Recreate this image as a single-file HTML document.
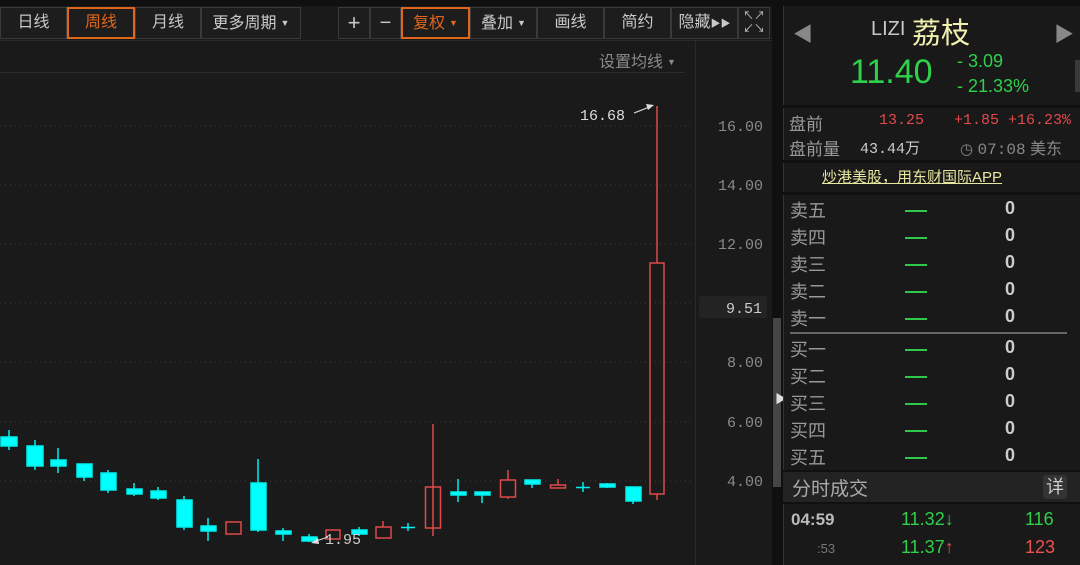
<!DOCTYPE html>
<html><head><meta charset="utf-8"><style>
*{margin:0;padding:0;box-sizing:border-box}
body{width:1080px;height:565px;background:#1a1a1a;position:relative;overflow:hidden;font-family:"Liberation Sans","Noto Sans CJK SC",sans-serif;color:#bbb}
.a{position:absolute;white-space:nowrap}
.btn{position:absolute;top:7px;height:32px;border:1px solid #3a3a3a;background:#1d1d1d;color:#c8c8c8;font-size:16px;line-height:30px;text-align:center}
.or{border:2px solid #e0661c;color:#e0661c;line-height:28px}
.tri{font-size:9px;vertical-align:2px;margin-left:4px}
.mono{font-family:"Liberation Mono","DejaVu Sans Mono",monospace}
.lbl{position:absolute;left:790px;font-size:18px;color:#999}
.dash{position:absolute;left:905px;width:22px;height:2px;background:#2ec94a}
.zero{position:absolute;left:1005px;font-size:18px;font-weight:bold;color:#ccc}
</style></head><body>
<div class="a" style="left:0;top:0;width:1080px;height:6px;background:#101010"></div>
<div class="btn" style="left:0;width:67px">日线</div>
<div class="btn or" style="left:67px;width:68px">周线</div>
<div class="btn" style="left:135px;width:66px">月线</div>
<div class="btn" style="left:201px;width:100px">更多周期<span class="tri">▼</span></div>
<div class="btn" style="left:338px;width:32px;font-size:22px">+</div>
<div class="btn" style="left:370px;width:31px;font-size:20px">−</div>
<div class="btn or" style="left:401px;width:69px">复权<span class="tri">▼</span></div>
<div class="btn" style="left:470px;width:67px">叠加<span class="tri">▼</span></div>
<div class="btn" style="left:537px;width:67px">画线</div>
<div class="btn" style="left:604px;width:67px">简约</div>
<div class="btn" style="left:671px;width:67px">隐藏<span style="font-size:10px">▶▶</span></div>
<div class="btn" style="left:738px;width:32px;font-size:11px;line-height:13px;padding-top:2px">↖↗<br>↙↘</div>
<div class="a" style="left:0;top:40px;width:772px;height:1px;background:#2a2a2a"></div>
<div class="a" style="left:599px;top:48px;font-size:16px;color:#8a8a8a">设置均线<span class="tri">▼</span></div>
<div class="a" style="left:0;top:72px;width:685px;height:1px;background:#2c2c2c"></div>
<div class="a" style="left:695px;top:41px;width:1px;height:524px;background:#2a2a2a"></div>
<div class="a" style="left:772px;top:6px;width:11px;height:559px;background:#101010"></div>
<div class="a" style="left:773px;top:318px;width:8px;height:169px;background:#454545"></div>
<div class="a" style="left:775px;top:390px;font-size:12px;color:#ddd">▶</div>

<svg class="a" style="left:0;top:0" width="772" height="565">
<g stroke="#3a3a3a" stroke-dasharray="1 4">
<line x1="0" y1="126" x2="695" y2="126"/><line x1="0" y1="185" x2="695" y2="185"/><line x1="0" y1="244" x2="695" y2="244"/><line x1="0" y1="303" x2="695" y2="303"/><line x1="0" y1="362" x2="695" y2="362"/><line x1="0" y1="422" x2="695" y2="422"/><line x1="0" y1="481" x2="695" y2="481"/>
</g>
<g fill="#8a8a8a" font-family="Liberation Mono,monospace" font-size="15" text-anchor="end">
<text x="763" y="131">16.00</text><text x="763" y="190">14.00</text><text x="763" y="249">12.00</text><text x="763" y="367">8.00</text><text x="763" y="427">6.00</text><text x="763" y="486">4.00</text>
</g>
<rect x="699" y="296" width="68" height="22" rx="2" fill="#232323"/>
<text x="762" y="313" fill="#ccc" font-family="Liberation Mono,monospace" font-size="15" text-anchor="end">9.51</text>
<g stroke="#00f0f0" fill="#00ffff" stroke-width="1.5">
<line x1="9" y1="430" x2="9" y2="450"/><rect x="1" y="437" width="16" height="9"/>
<line x1="35" y1="440" x2="35" y2="470"/><rect x="27" y="446" width="16" height="20"/>
<line x1="58" y1="448" x2="58" y2="473"/><rect x="51" y="460" width="15" height="6"/>
<line x1="84" y1="464" x2="84" y2="481"/><rect x="77" y="464" width="15" height="13"/>
<line x1="108" y1="470" x2="108" y2="493"/><rect x="101" y="473" width="15" height="17"/>
<line x1="134" y1="483" x2="134" y2="496"/><rect x="127" y="489" width="15" height="5"/>
<line x1="158" y1="487" x2="158" y2="500"/><rect x="151" y="491" width="15" height="7"/>
<line x1="184" y1="496" x2="184" y2="530"/><rect x="177" y="500" width="15" height="27"/>
<line x1="208" y1="518" x2="208" y2="541"/><rect x="201" y="526" width="15" height="5"/>
<line x1="258" y1="459" x2="258" y2="532"/><rect x="251" y="483" width="15" height="47"/>
<line x1="283" y1="528" x2="283" y2="541"/><rect x="276" y="531" width="15" height="3"/>
<line x1="309" y1="534" x2="309" y2="542"/><rect x="302" y="537" width="15" height="4"/>
<line x1="359" y1="527" x2="359" y2="536"/><rect x="352" y="530" width="15" height="4"/>
<line x1="408" y1="523" x2="408" y2="531"/><line x1="401" y1="527.5" x2="415" y2="527.5"/>
<line x1="458" y1="479" x2="458" y2="502"/><rect x="451" y="492" width="15" height="3"/>
<line x1="482" y1="492" x2="482" y2="503"/><rect x="475" y="492" width="15" height="3"/>
<line x1="532" y1="480" x2="532" y2="488"/><rect x="525" y="480" width="15" height="4"/>
<line x1="583" y1="482" x2="583" y2="492"/><line x1="576" y1="487.5" x2="590" y2="487.5"/>
<line x1="607" y1="483" x2="607" y2="488"/><rect x="600" y="484" width="15" height="3"/>
<line x1="633" y1="487" x2="633" y2="504"/><rect x="626" y="487" width="15" height="14"/>
</g>
<g stroke="#e04a4a" fill="none" stroke-width="1.5">
<rect x="226" y="522" width="15" height="12"/>
<rect x="326" y="530" width="14" height="9"/>
<line x1="383" y1="521" x2="383" y2="527"/><rect x="376" y="527" width="15" height="11"/>
<line x1="433" y1="424" x2="433" y2="536"/><rect x="425.5" y="487" width="15" height="41"/>
<line x1="508" y1="470" x2="508" y2="480"/><line x1="508" y1="497" x2="508" y2="499"/><rect x="500.5" y="480" width="15" height="17"/>
<line x1="558" y1="479" x2="558" y2="485"/><rect x="550.5" y="485" width="15" height="3"/>
<line x1="657" y1="106" x2="657" y2="263"/><line x1="657" y1="494" x2="657" y2="500"/><rect x="650" y="263" width="14" height="231"/>
</g>
<text x="580" y="120" fill="#ddd" font-family="Liberation Mono,monospace" font-size="15">16.68</text>
<line x1="634" y1="113" x2="652" y2="106" stroke="#ddd" stroke-width="1.2"/><path d="M646 104 L654 105 L648 110Z" fill="#ddd"/>
<text x="325" y="544" fill="#ccc" font-family="Liberation Mono,monospace" font-size="15">1.95</text>
<line x1="316" y1="541" x2="328" y2="537" stroke="#ddd"/><path d="M311 543 L318 538 L319 544Z" fill="#ddd"/>
</svg>

<!-- right panel -->
<div class="a" style="left:783px;top:6px;width:297px;height:559px;background:#191919;border-left:1px solid #333"></div>
<div class="a" style="left:783px;top:105px;width:297px;height:3px;background:#101010"></div>
<div class="a" style="left:793px;top:18px;font-size:20px;color:#888">◀</div>
<div class="a" style="left:1054px;top:18px;font-size:20px;color:#888">▶</div>
<div class="a" style="left:871px;top:18px;font-size:20px;color:#c8c8c8">LIZI</div>
<div class="a" style="left:912px;top:10px;font-size:29px;color:#f0f0b0">荔枝</div>
<div class="a" style="left:850px;top:53px;font-size:34px;color:#2ed14a">11.40</div>
<div class="a" style="left:957px;top:51px;font-size:18px;color:#2ed14a">- 3.09</div>
<div class="a" style="left:957px;top:76px;font-size:18px;color:#2ed14a">- 21.33%</div>
<div class="a" style="left:1075px;top:60px;width:5px;height:32px;background:#3a3a3a"></div>
<div class="a" style="left:789px;top:110px;font-size:17px;color:#999">盘前</div>
<div class="a mono" style="left:879px;top:112px;font-size:15px;color:#e04a4a">13.25</div>
<div class="a mono" style="left:954px;top:112px;font-size:15px;color:#e04a4a">+1.85 +16.23%</div>
<div class="a" style="left:789px;top:135px;font-size:17px;color:#999">盘前量</div>
<div class="a mono" style="left:860px;top:137px;font-size:15px;color:#ccc">43.44<span style="font-family:'Noto Sans CJK SC'">万</span></div>
<div class="a" style="left:960px;top:135px;font-size:16px;color:#888"><span style="font-size:15px">◷</span> <span class="mono">07:08</span> 美东</div>
<div class="a" style="left:783px;top:160px;width:297px;height:3px;background:#101010"></div>
<div class="a" style="left:822px;top:166px;font-size:15px;color:#e8e8a0;text-decoration:underline">炒港美股，用东财国际APP</div>
<div class="a" style="left:783px;top:192px;width:297px;height:3px;background:#101010"></div>
<div class="lbl" style="top:197px">卖五</div><div class="dash" style="top:210px"></div><div class="zero" style="top:198px">0</div>
<div class="lbl" style="top:224px">卖四</div><div class="dash" style="top:237px"></div><div class="zero" style="top:225px">0</div>
<div class="lbl" style="top:251px">卖三</div><div class="dash" style="top:264px"></div><div class="zero" style="top:252px">0</div>
<div class="lbl" style="top:278px">卖二</div><div class="dash" style="top:291px"></div><div class="zero" style="top:279px">0</div>
<div class="lbl" style="top:305px">卖一</div><div class="dash" style="top:318px"></div><div class="zero" style="top:306px">0</div>
<div class="a" style="left:790px;top:332px;width:277px;height:2px;background:#666"></div>
<div class="lbl" style="top:336px">买一</div><div class="dash" style="top:349px"></div><div class="zero" style="top:337px">0</div>
<div class="lbl" style="top:363px">买二</div><div class="dash" style="top:376px"></div><div class="zero" style="top:364px">0</div>
<div class="lbl" style="top:390px">买三</div><div class="dash" style="top:403px"></div><div class="zero" style="top:391px">0</div>
<div class="lbl" style="top:417px">买四</div><div class="dash" style="top:430px"></div><div class="zero" style="top:418px">0</div>
<div class="lbl" style="top:444px">买五</div><div class="dash" style="top:457px"></div><div class="zero" style="top:445px">0</div>
<div class="a" style="left:783px;top:470px;width:297px;height:34px;background:#232323;border-top:2px solid #101010;border-bottom:2px solid #101010"></div>
<div class="a" style="left:792px;top:474px;font-size:19px;color:#aaa">分时成交</div>
<div class="a" style="left:1043px;top:475px;width:24px;height:24px;background:#333;border-radius:3px;font-size:18px;color:#ccc;text-align:center;line-height:24px">详</div>
<div class="a" style="left:791px;top:510px;font-size:17px;font-weight:bold;color:#bbb">04:59</div>
<div class="a" style="left:901px;top:509px;font-size:18px;color:#2ed14a">11.32<b>↓</b></div>
<div class="a" style="left:1025px;top:509px;font-size:18px;color:#2ed14a">116</div>
<div class="a" style="left:817px;top:541px;font-size:13px;color:#777">:53</div>
<div class="a" style="left:901px;top:537px;font-size:18px;color:#2ed14a">11.37<b style="color:#f05050">↑</b></div>
<div class="a" style="left:1025px;top:537px;font-size:18px;color:#f05050">123</div>
</body></html>
